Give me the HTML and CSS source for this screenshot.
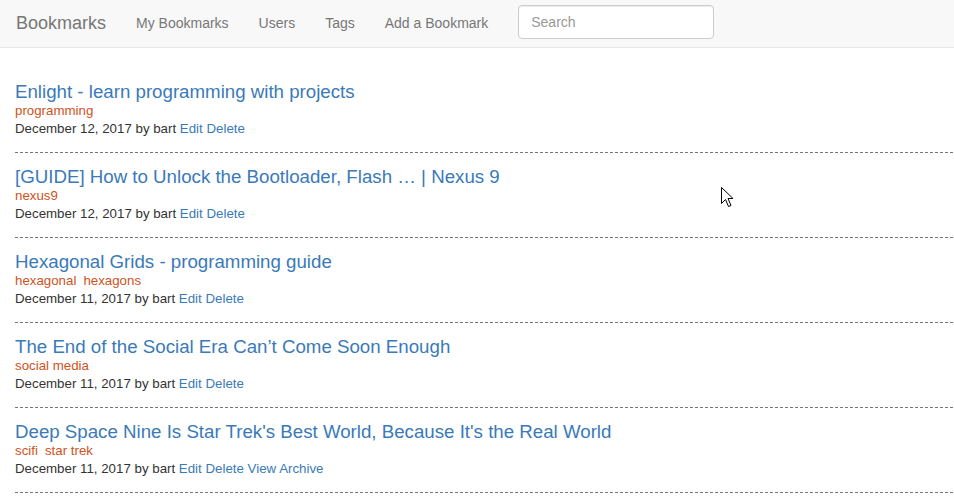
FILE: index.html
```html
<!DOCTYPE html>
<html>
<head>
<meta charset="utf-8">
<title>Bookmarks</title>
<link rel="stylesheet" href="styles.css">
</head>
<body>
<nav class="navbar">
  <a class="brand" href="#">Bookmarks</a>
  <ul class="nav">
    <li><a href="#">My Bookmarks</a></li>
    <li><a href="#">Users</a></li>
    <li><a href="#">Tags</a></li>
    <li><a href="#">Add a Bookmark</a></li>
  </ul>
  <form class="navbar-form">
    <input class="search" type="text" placeholder="Search">
  </form>
</nav>
<main class="content">
  <div class="item">
    <a class="title" href="#">Enlight - learn programming with projects</a>
    <div class="tags"><span class="tag">programming</span></div>
    <div class="meta">December 12, 2017 by bart <a href="#">Edit</a> <a href="#">Delete</a></div>
  </div>
  <div class="sep"></div>
  <div class="item">
    <a class="title" href="#">[GUIDE] How to Unlock the Bootloader, Flash … | Nexus 9</a>
    <div class="tags"><span class="tag">nexus9</span></div>
    <div class="meta">December 12, 2017 by bart <a href="#">Edit</a> <a href="#">Delete</a></div>
  </div>
  <div class="sep"></div>
  <div class="item">
    <a class="title" href="#">Hexagonal Grids - programming guide</a>
    <div class="tags"><span class="tag">hexagonal</span><span class="tag">hexagons</span></div>
    <div class="meta">December 11, 2017 by bart <a href="#">Edit</a> <a href="#">Delete</a></div>
  </div>
  <div class="sep"></div>
  <div class="item">
    <a class="title" href="#">The End of the Social Era Can’t Come Soon Enough</a>
    <div class="tags"><span class="tag">social media</span></div>
    <div class="meta">December 11, 2017 by bart <a href="#">Edit</a> <a href="#">Delete</a></div>
  </div>
  <div class="sep"></div>
  <div class="item">
    <a class="title" href="#">Deep Space Nine Is Star Trek's Best World, Because It's the Real World</a>
    <div class="tags"><span class="tag">scifi</span><span class="tag">star trek</span></div>
    <div class="meta">December 11, 2017 by bart <a href="#">Edit</a> <a href="#">Delete</a> <a href="#">View Archive</a></div>
  </div>
  <div class="sep"></div>
</main>
<svg class="cursor" width="13" height="21" viewBox="0 0 13 21">
  <path d="M0.5 0.5 L0.5 16.5 L4.5 12.5 L7.5 19.5 L10 18.5 L7 11.5 L12 11.5 Z" fill="#fff" stroke="#000" stroke-width="1" stroke-linejoin="miter"/>
</svg>
</body>
</html>
```
FILE: styles.css
```css
html, body {
  margin: 0;
  padding: 0;
  background: #fff;
  font-family: "Liberation Sans", Arial, sans-serif;
  font-size: 14px;
  color: #333;
  overflow: hidden;
}
a { text-decoration: none; color: #337ab7; }

.navbar {
  display: flex;
  align-items: center;
  height: 47px;
  background: #f8f8f8;
  border-bottom: 1px solid #e7e7e7;
}
.brand {
  color: #777;
  font-size: 18px;
  padding: 0 15px 0 16px;
  line-height: 20px;
  margin-top: -2px;
}
.nav {
  display: flex;
  list-style: none;
  margin: -2px 0 0;
  padding: 0;
}
.nav a {
  display: block;
  color: #777;
  padding: 0 15px;
  line-height: 20px;
}
.navbar-form {
  margin: 0;
  padding: 0 15px;
  display: flex;
  align-items: center;
}
.search {
  box-sizing: border-box;
  width: 196px;
  height: 34px;
  margin-top: -4px;
  padding: 6px 12px;
  border: 1px solid #ccc;
  border-radius: 4px;
  font-family: "Liberation Sans", Arial, sans-serif;
  font-size: 14px;
  color: #555;
  background: #fff;
  box-shadow: inset 0 1px 1px rgba(0,0,0,.075);
}
.search::placeholder { color: #999; }

.content {
  padding: 33px 0 0 15px;
}
.item { display: flex; flex-direction: column; align-items: flex-start; }
.title {
  font-size: 18.7px;
  line-height: 20px;
  color: #3a7ab8;
  margin-top: 1px;
}
.tags {
  display: flex;
  gap: 7px;
  font-size: 13.3px;
  line-height: 18px;
}
.tag { color: #d0521b; }
.meta {
  font-size: 13.3px;
  line-height: 18px;
  color: #333;
}
.meta a { color: #3a7ab8; }
.sep {
  height: 1px;
  margin: 14px 0 13px;
  background: repeating-linear-gradient(to right, #777 0 3px, transparent 3px 5px);
}
.cursor {
  position: absolute;
  left: 721px;
  top: 187px;
}
```
